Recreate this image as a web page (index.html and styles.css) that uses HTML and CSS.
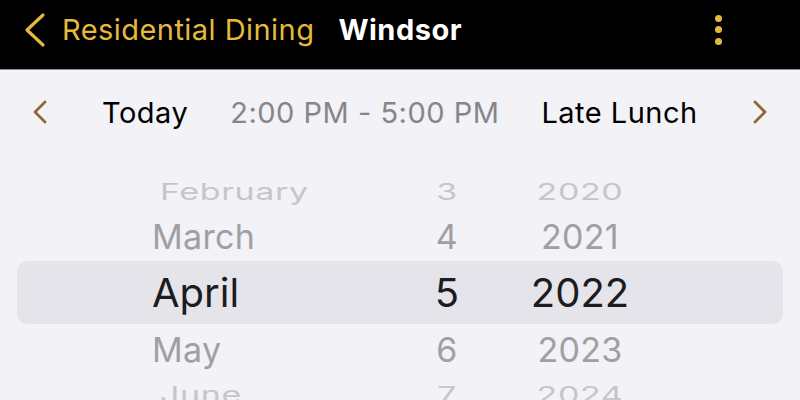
FILE: index.html
```html
<!DOCTYPE html>
<html lang="en">
<head>
    <meta charset="UTF-8">
    <meta name="viewport" content="width=device-width, initial-scale=1.0">
    <title>Windsor</title>
    <link rel="stylesheet" href="styles.css">
</head>
<body>

    <header class="topbar">
        <a class="back" href="#">
            <svg class="back-icon" width="22" height="36" viewBox="0 0 22 36">
                <polyline points="19,3 3,18 19,33" fill="none" stroke="#e6b93c" stroke-width="3.2" stroke-linecap="round" stroke-linejoin="round"/>
            </svg>
            <span class="back-label">Residential Dining</span>
        </a>
        <h1 class="title">Windsor</h1>
        <button class="more" type="button" aria-label="More">
            <span></span><span></span><span></span>
        </button>
    </header>

    <nav class="meal-nav">
        <a class="arrow" href="#prev">
            <svg width="16" height="24" viewBox="0 0 16 24">
                <polyline points="13,2 3,12 13,22" fill="none" stroke="#8b6b34" stroke-width="2.8" stroke-linecap="round" stroke-linejoin="round"/>
            </svg>
        </a>
        <span class="day">Today</span>
        <span class="hours">2:00 PM - 5:00 PM</span>
        <span class="meal">Late Lunch</span>
        <a class="arrow" href="#next">
            <svg width="16" height="24" viewBox="0 0 16 24">
                <polyline points="3,2 13,12 3,22" fill="none" stroke="#8b6b34" stroke-width="2.8" stroke-linecap="round" stroke-linejoin="round"/>
            </svg>
        </a>
    </nav>

    <section class="picker">
        <div class="row far top">
            <span class="month">February</span><span class="num">3</span><span class="year">2020</span>
        </div>
        <div class="row near">
            <span class="month">March</span><span class="num">4</span><span class="year">2021</span>
        </div>
        <div class="row selected">
            <span class="month">April</span><span class="num">5</span><span class="year">2022</span>
        </div>
        <div class="row near">
            <span class="month">May</span><span class="num">6</span><span class="year">2023</span>
        </div>
        <div class="row far bottom">
            <span class="month">June</span><span class="num">7</span><span class="year">2024</span>
        </div>
    </section>

</body>
</html>
```

FILE: styles.css
```css
body {
    font-family: Inter, "Noto Sans", sans-serif;
    margin: 0;
    padding: 0;
    background-color: #f2f2f7;
    overflow: hidden;
}
.topbar {
    background-color: #000;
    height: 69px;
    border-bottom: 1px solid #8e8e93;
    display: flex;
    align-items: center;
    padding: 0 0 10px 24px;
    box-sizing: border-box;
    height: 70px;
}
.back {
    display: flex;
    align-items: center;
    text-decoration: none;
    color: #e6b93c;
}
.back-label {
    font-size: 29px;
    margin-left: 16px;
    letter-spacing: 0.45px;
}
.title {
    color: #fff;
    font-size: 29px;
    font-weight: 700;
    margin: 0 0 0 24px;
    letter-spacing: 0.5px;
}
.more {
    margin-left: auto;
    margin-right: 78px;
    background: none;
    border: none;
    padding: 0;
    display: flex;
    flex-direction: column;
    gap: 4.5px;
}
.more span {
    width: 7px;
    height: 7px;
    border-radius: 50%;
    background-color: #e6b93c;
}
.meal-nav {
    height: 84px;
    display: flex;
    align-items: center;
    padding: 0 32px;
    font-size: 29px;
    letter-spacing: 0.5px;
}
.arrow {
    display: flex;
}
.day {
    color: #000;
    margin-left: 54px;
}
.hours {
    color: #86868a;
    margin-left: 42px;
}
.meal {
    color: #000;
    margin-left: 42px;
}
.meal-nav .arrow:last-child {
    margin-left: auto;
}
.picker {
    margin: 0 17px;
    padding-top: 17px;
}
.row {
    display: grid;
    grid-template-columns: 135px 265px 60px 53px 100px;
    align-items: center;
    height: 50px;
}
.row .month {
    grid-column: 2;
}
.row .num {
    grid-column: 3;
    text-align: center;
}
.row .year {
    grid-column: 5;
    text-align: center;
}
.near {
    font-size: 34px;
    color: #a0a0a4;
    letter-spacing: 0.3px;
}
.far {
    height: 40px;
    font-size: 34px;
    color: #c6c6c9;
    transform: scaleY(0.66);
    letter-spacing: 0.6px;
}
.far .month {
    padding-left: 8px;
}
.selected {
    height: 63px;
    font-size: 40px;
    color: #1c1c1e;
    background-color: #e4e4ea;
    border-radius: 11px;
}
```
